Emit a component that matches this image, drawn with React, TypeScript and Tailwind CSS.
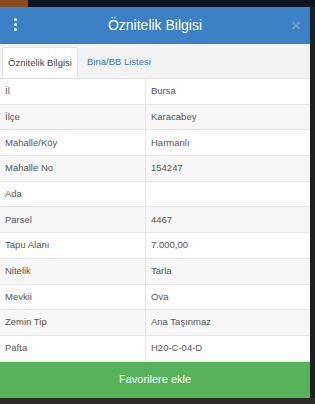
import React from "react";

const rows: [string, string][] = [
  ["İl", "Bursa"],
  ["İlçe", "Karacabey"],
  ["Mahalle/Köy", "Harmanlı"],
  ["Mahalle No", "154247"],
  ["Ada", ""],
  ["Parsel", "4467"],
  ["Tapu Alanı", "7.000,00"],
  ["Nitelik", "Tarla"],
  ["Mevkii", "Ova"],
  ["Zemin Tip", "Ana Taşınmaz"],
  ["Pafta", "H20-C-04-D"],
];

export default function App() {
  return (
    <div
      className="w-[315px] h-[404px] bg-[#151a1f] flex flex-col overflow-hidden"
      style={{ fontFamily: '"Liberation Sans", Arial, sans-serif' }}
    >
      <div className="h-[7px] flex shrink-0">
        <div className="w-[28px] bg-[#8a4a1c]" />
        <div className="flex-1 bg-[#0b1420]" />
      </div>
      <div className="flex flex-1">
        <div className="w-[310px] flex flex-col bg-white">
          <div className="h-[37px] bg-[#3b7fc4] flex items-center relative shrink-0">
            <div className="absolute left-[14px] top-[11px] flex flex-col gap-[2px]">
              <div className="w-[3px] h-[3px] rounded-full bg-white" />
              <div className="w-[3px] h-[3px] rounded-full bg-white" />
              <div className="w-[3px] h-[3px] rounded-full bg-white" />
            </div>
            <div className="flex-1 text-center text-white text-[14px]">Öznitelik Bilgisi</div>
            <div className="absolute right-[9px] top-[10px] text-[#6a98c9] text-[17px] font-bold leading-none">×</div>
          </div>
          <div className="h-[35px] bg-[#f2f2f2] flex items-end pl-[2px] shrink-0 border-b border-[#e2e2e2]">
            <div className="h-[31px] w-[76px] bg-white flex items-center justify-center text-[9.5px] text-[#444] border border-b-0 border-[#e2e2e2] rounded-t-[2px]">
              Öznitelik Bilgisi
            </div>
            <div className="h-[31px] flex items-center pl-[9px] text-[9.5px] text-[#3a78b8]">Bina/BB Listesi</div>
          </div>
          <div className="flex flex-col">
            {rows.map(([k, v], i) => (
              <div
                key={k}
                className={`h-[25.7px] flex border-b border-[#e6e6e6] text-[9.5px] text-[#555] ${i % 2 === 1 ? "bg-[#f7f7f7]" : "bg-white"}`}
              >
                <div className="w-[146px] pl-[5px] flex items-center border-r border-[#e6e6e6]">{k}</div>
                <div className="flex-1 pl-[5px] flex items-center">{v}</div>
              </div>
            ))}
          </div>
          <div className="h-[36px] bg-[#56b35a] flex items-center justify-center text-white text-[11px] shrink-0">
            Favorilere ekle
          </div>
        </div>
        <div className="flex-1 bg-[#1c1f22]" />
      </div>
      <div className="h-[6px] bg-[#2e2a25] shrink-0" />
    </div>
  );
}
